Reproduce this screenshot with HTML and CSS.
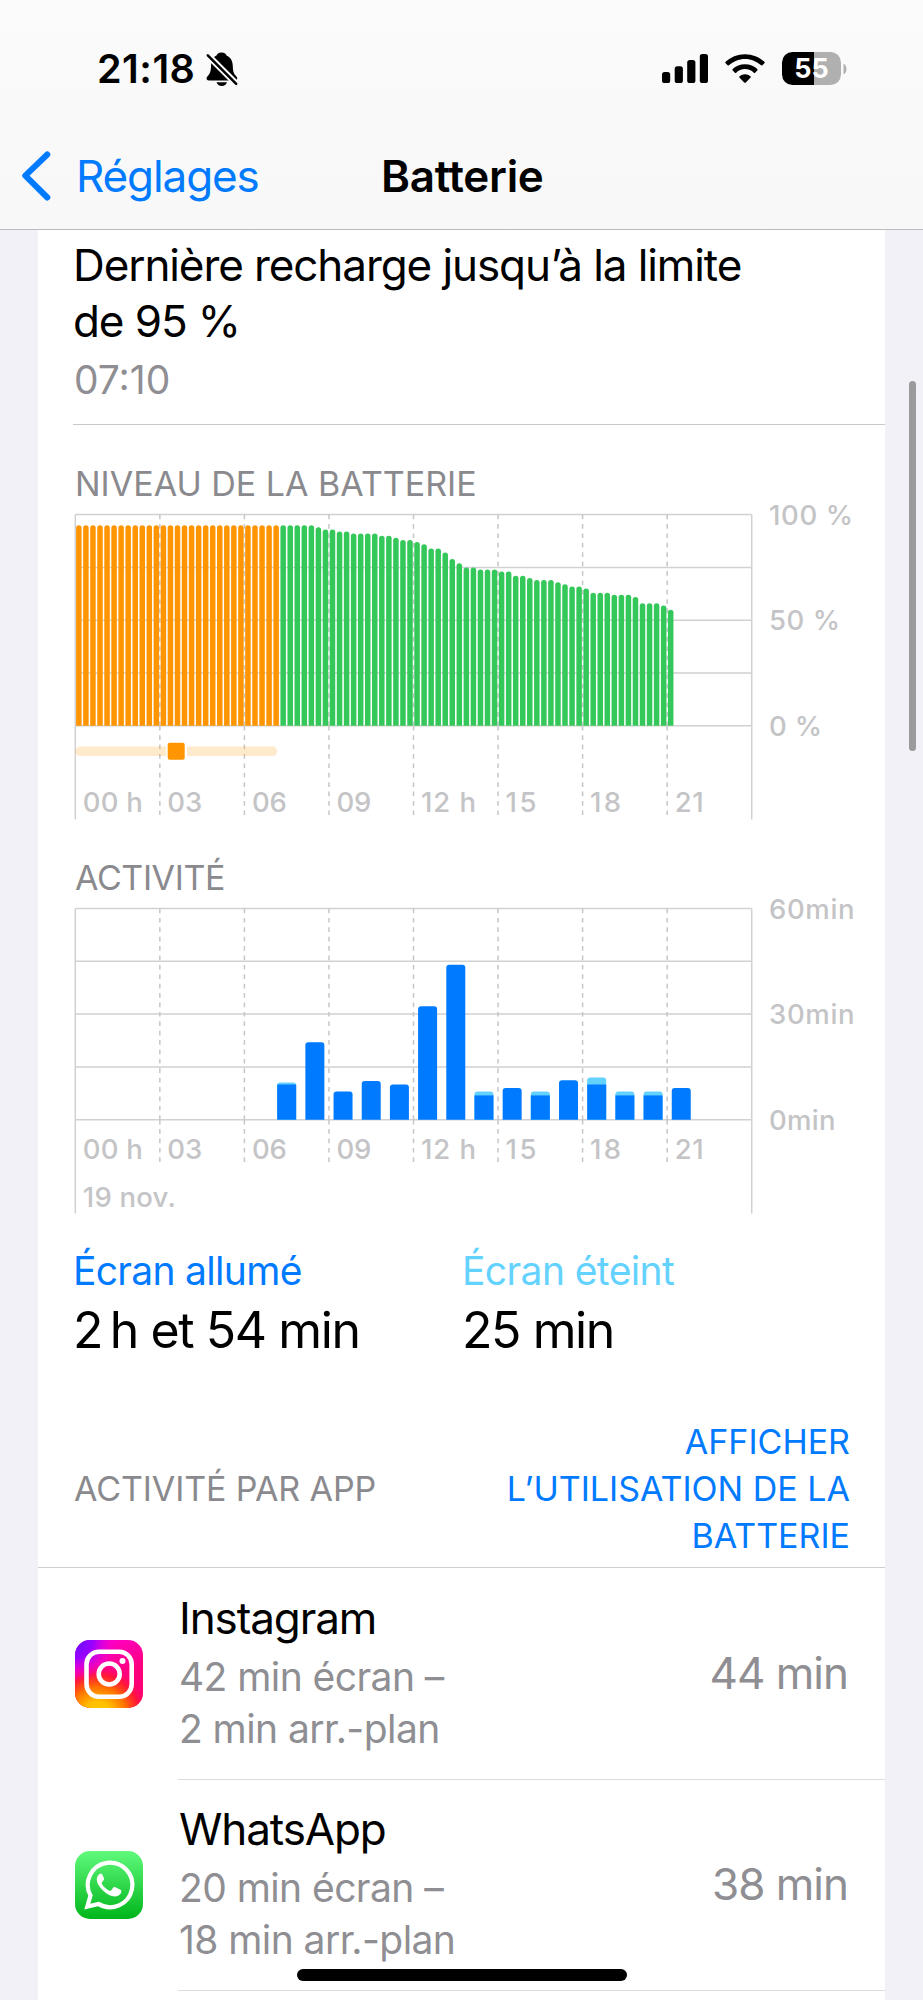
FILE: index.html
```html
<!DOCTYPE html>
<html lang="fr">
<head>
<meta charset="utf-8">
<title>Batterie</title>
<link rel="stylesheet" href="styles.css">
</head>
<body>
<div class="screen">
  <header class="header">
    <div class="status">
      <div class="status-left">
        <span class="clock">21:18</span>
        <svg class="bell" width="34" height="36" viewBox="0 0 34 36">
          <defs><mask id="cut"><rect width="34" height="36" fill="#fff"/><path d="M0 1.5 34 35.5" stroke="#000" stroke-width="6.4"/></mask></defs>
          <g mask="url(#cut)">
            <path d="M16.500 1.500c3.200 0 4.700 1.600 5 3 4.200 1.700 6.200 5.800 6.300 10.500.1 5 .8 7.600 3.200 10 .9.900 1.200 1.600 1.200 2.500 0 1.200-.9 2-2.400 2H4c-1.500 0-2.400-.8-2.400-2 0-.9.300-1.600 1.200-2.500 2.400-2.400 3.100-5 3.200-10 .1-4.700 1.600-8.800 5.500-10.500.5-1.400 1.800-3 5-3z"/>
          </g>
          <path d="M11.500 31.200h10.500c-.7 2.200-2.600 3.700-5.200 3.700s-4.600-1.500-5.300-3.700z"/>
          <path d="M2.800 4.300 31.200 32.800" stroke="#000" stroke-width="2.500" stroke-linecap="round"/>
        </svg>
      </div>
      <div class="status-right">
        <svg width="46" height="30" viewBox="0 0 46 30">
          <rect x="0" y="18" width="8.200" height="11" rx="2.600"/><rect x="12.700" y="12.300" width="8.200" height="16.700" rx="2.600"/>
          <rect x="25.200" y="6" width="8.200" height="23" rx="2.600"/><rect x="37.800" y="0" width="8.200" height="29" rx="2.600"/>
        </svg>
        <svg width="40" height="30" viewBox="0 0 40 30">
          <path d="M20 0.200c7.700 0 14.500 3 19.400 7.600.4.400.4 1 0 1.400l-2 2.100c-.4.400-.9.400-1.300 0C31.700 7.400 26.300 4.900 20 4.900S8.300 7.400 3.900 11.300c-.4.400-.9.400-1.300 0l-2-2.100c-.4-.4-.4-1 0-1.400C5.500 3.200 12.300.2 20 .2z"/>
          <path d="M20 10.200c4.900 0 9.200 1.900 12.300 4.900.4.400.4 1 0 1.400l-2.200 2.200c-.4.400-.9.400-1.300 0-2.300-2.200-5.400-3.600-8.800-3.600s-6.500 1.400-8.800 3.600c-.4.400-.9.400-1.300 0l-2.200-2.200c-.4-.4-.4-1 0-1.400 3.100-3 7.400-4.900 12.300-4.900z"/>
          <path d="M20 20.200c2.100 0 4 .8 5.400 2 .5.400.5 1 0 1.500l-4.600 4.700c-.5.500-1.100.5-1.600 0l-4.600-4.700c-.5-.5-.5-1.100 0-1.500 1.400-1.200 3.300-2 5.400-2z"/>
        </svg>
        <div class="batt"><div class="batt-body">55</div><svg width="4" height="12" viewBox="0 0 4 12"><path d="M.5.8C2.500 1.600 3.500 3.600 3.500 6S2.500 10.400.5 11.200z" fill="#b0b0b0"/></svg></div>
      </div>
    </div>
    <nav class="nav">
      <svg class="chevron" width="30" height="50" viewBox="0 0 30 50"><path d="M26.300 3.500 4.300 24.700l22 21.800" fill="none" stroke="#007aff" stroke-width="6" stroke-linecap="round" stroke-linejoin="round"/></svg>
      <span class="back">Réglages</span>
      <span class="title">Batterie</span>
    </nav>
  </header>

  <main class="card">
    <section class="last-charge">
      <div class="lc-title">Dernière recharge jusqu’à la limite<br>de 95 %</div>
      <div class="lc-time">07:10</div>
    </section>

    <section class="charts">
      <h2 class="caption">NIVEAU DE LA BATTERIE</h2>
      <svg class="chart" id="level" width="800" height="320"></svg>
      <h2 class="caption cap-act">ACTIVITÉ</h2>
      <svg class="chart" id="activity" width="800" height="320"></svg>
    </section>

    <section class="summary">
      <div class="sum-item"><div class="sum-label on">Écran allumé</div><div class="sum-value">2&#8201;h et 54 min</div></div>
      <div class="sum-item"><div class="sum-label off">Écran éteint</div><div class="sum-value">25 min</div></div>
    </section>

    <section class="apps-head">
      <span class="caption apps-cap">ACTIVITÉ PAR APP</span>
      <span class="apps-link">AFFICHER<br>L’UTILISATION DE LA<br>BATTERIE</span>
    </section>

    <section class="app">
      <svg class="app-icon" width="68" height="68" viewBox="0 0 68 68">
        <defs>
          <linearGradient id="igBase" x1="0.3" y1="0" x2="0.7" y2="1"><stop offset="0" stop-color="#ff00d0"/><stop offset=".55" stop-color="#ff0080"/><stop offset="1" stop-color="#ff0070"/></linearGradient>
          <radialGradient id="igWarm" gradientUnits="userSpaceOnUse" cx="23" cy="76" r="53"><stop offset="0" stop-color="#ffd000"/><stop offset=".28" stop-color="#ffbe00"/><stop offset=".55" stop-color="#ff7000"/><stop offset=".78" stop-color="#ff1a30" stop-opacity=".9"/><stop offset="1" stop-color="#ff0080" stop-opacity="0"/></radialGradient>
          <radialGradient id="igCool" gradientUnits="userSpaceOnUse" cx="2" cy="2" r="40"><stop offset="0" stop-color="#6a10ff"/><stop offset=".4" stop-color="#9a00ff"/><stop offset="1" stop-color="#ff00d8" stop-opacity="0"/></radialGradient>
        </defs>
        <rect width="68" height="68" rx="15" fill="url(#igBase)"/>
        <rect width="68" height="68" rx="15" fill="url(#igWarm)"/>
        <rect width="68" height="68" rx="15" fill="url(#igCool)"/>
        <g fill="none" stroke="#fff" stroke-width="4.600"><rect x="11.500" y="11.700" width="45.200" height="45" rx="12.500"/><circle cx="34.200" cy="34" r="10.500"/></g>
        <circle cx="47.500" cy="21" r="3"/>
      </svg>
      <div class="app-text"><div class="app-name">Instagram</div><div class="app-sub">42 min écran –<br>2 min arr.-plan</div></div>
      <div class="app-time">44 min</div>
    </section>

    <section class="app">
      <svg class="app-icon" width="68" height="68" viewBox="0 0 68 68">
        <defs><linearGradient id="wa" x1="0" y1="0" x2="0" y2="1"><stop offset="0" stop-color="#60fa7c"/><stop offset="1" stop-color="#00b51a"/></linearGradient></defs>
        <rect width="68" height="68" rx="15" fill="url(#wa)"/>
        <path d="M12.300 55.600 15.500 44.600A22.300 22.300 0 1 1 23.400 52.900z" fill="none" stroke="#fff" stroke-width="4.200" stroke-linejoin="miter"/>
        <path d="M25.400 22.700c-1.200 0-3.600 2.300-3.600 6.100 0 3.100 1.800 5.800 3.800 8.200 3.300 4 7.600 7.300 12.400 8.300 3.600.6 7.200-1.400 8-3.400.4-1.300.4-2.500 0-2.800l-6-3c-.7-.3-1.300-.2-1.700.4l-2.200 2.900c-.4.500-1 .6-1.600.3-3.200-1.400-6-4-7.700-7-.3-.6-.2-1 .2-1.500l1.900-2.500c.3-.5.3-.9.100-1.400l-2-4.200c-.4-.6-1.100-.4-1.600-.4z" fill="#fff"/>
      </svg>
      <div class="app-text"><div class="app-name">WhatsApp</div><div class="app-sub">20 min écran –<br>18 min arr.-plan</div></div>
      <div class="app-time">38 min</div>
    </section>
  </main>

  <div class="scrollbar"></div>
  <div class="home-bar"></div>
</div>
<script src="charts.js"></script>
</body>
</html>
```
FILE: styles.css
```css
* { box-sizing: border-box; }
body { margin: 0; font-family: Inter, "Liberation Sans", sans-serif; color: #000; background: #f2f1f7; }
.screen { position: relative; width: 923px; height: 2000px; overflow: hidden; background: #f2f1f7; display: flex; flex-direction: column; }

.header { flex: none; height: 230px; background: linear-gradient(#fbfbfc, #f9f9f9 50%, #f8f8f8); border-bottom: 1px solid #bcbcbf; padding-top: 44px; }
.status { height: 50px; display: flex; justify-content: space-between; padding: 0 76px 0 97px; }
.status-left { display: flex; align-items: flex-start; }
.clock { width: 108px; font-size: 39.500px; font-weight: 600; line-height: 50px; letter-spacing: 0.5px; white-space: nowrap; }
.bell { margin-top: 7px; }
.status-right { display: flex; align-items: flex-start; gap: 17px; padding-top: 10px; }
.batt { display: flex; align-items: center; gap: 2px; margin-top: -2px; }
.batt-body { width: 59px; height: 33px; border-radius: 10.500px; background: linear-gradient(90deg, #000 32.500px, #b0b0b0 32.500px); color: #fff; font-size: 27px; font-weight: 700; line-height: 34px; text-align: center; }
.nav { display: grid; grid-template-columns: 76px 305px 1fr; align-items: center; height: 50px; margin-top: 57px; font-size: 44px; line-height: 50px; }
.chevron { margin-left: 21px; }
.back { color: #007aff; letter-spacing: -1.100px; }
.title { font-weight: 600; letter-spacing: -0.3px; }

.card { flex: none; width: 847px; height: 1770px; margin-left: 38px; background: #fff; }
.last-charge { height: 195px; margin-left: 35px; padding-top: 7px; border-bottom: 1px solid #c8c8ca; }
.lc-title { font-size: 44px; line-height: 56px; letter-spacing: -1.090px; white-space: nowrap; }
.lc-time { font-size: 39px; line-height: 50px; margin-top: 6px; color: #8e8e93; padding-left: 1px; }

.caption { margin: 0; font-size: 34px; font-weight: 400; line-height: 40px; color: #8a8a8e; white-space: nowrap; }
.charts { height: 808px; padding: 39px 0 0 37px; }
.cap-act { letter-spacing: -0.4px; }
.chart { display: block; font-size: 27.500px; font-weight: 500; overflow: visible; }
#level { margin-bottom: 34px; }

.summary { display: grid; grid-template-columns: 389px 1fr; height: 155px; padding-left: 35px; padding-top: 13px; }
.sum-label { font-size: 39px; line-height: 50px; letter-spacing: -0.7px; white-space: nowrap; }
.sum-label.on { color: #007aff; }
.sum-label.off { color: #64d2ff; letter-spacing: -0.6px; }
.sum-value { font-size: 50px; line-height: 60px; margin-top: 4px; letter-spacing: -1.420px; white-space: nowrap; }

.apps-head { display: flex; justify-content: space-between; align-items: center; height: 180px; padding: 0 35px 0 36px; border-bottom: 1px solid #cfcfd1; }
.apps-cap { padding-top: 22px; letter-spacing: -0.1px; }
.apps-link { font-size: 34px; line-height: 47px; color: #007aff; text-align: right; padding-top: 21px; white-space: nowrap; }

.app { display: grid; grid-template-columns: 103px 1fr auto; height: 211px; padding-left: 37px; }
.app-icon { align-self: center; margin-top: -1px; fill: #fff; }
.app-text { border-bottom: 1px solid #dcdcde; padding-left: 1px; padding-top: 22px; }
.app-name { font-size: 44px; line-height: 56px; letter-spacing: -1.100px; white-space: nowrap; }
.app-sub { font-size: 39px; line-height: 52px; letter-spacing: -0.57px; color: #8e8e93; margin-top: 5px; white-space: nowrap; }
.app-time { border-bottom: 1px solid #dcdcde; font-size: 44px; line-height: 211px; letter-spacing: -1px; padding-right: 37px; color: #8e8e93; }

.scrollbar { position: absolute; left: 909px; top: 381px; width: 7px; height: 370px; border-radius: 4px; background: #9b9b9d; }
.home-bar { position: absolute; left: 297px; top: 1969px; width: 330px; height: 12px; border-radius: 6px; background: #000; }
```
FILE: charts.js
```js
const NS = "http://www.w3.org/2000/svg";
const PLOT_W = 676.4, PLOT_H = 211.2, X0 = 0.3, GRID = "#d1d1d3";

function add(svg, name, attrs, text) {
  const el = document.createElementNS(NS, name);
  for (const key in attrs) el.setAttribute(key, attrs[key]);
  if (text) el.textContent = text;
  svg.appendChild(el);
}

function label(svg, x, y, text, width) {
  add(svg, "text", { x, y, fill: "#c4c4c6", textLength: width, lengthAdjust: "spacing" }, text);
}

function grid(svg, top, outerBottom, dashBottom) {
  for (let i = 0; i <= 4; i++) {
    const y = top + (PLOT_H * i) / 4;
    add(svg, "path", { d: `M${X0} ${y}h${PLOT_W}`, stroke: GRID, "stroke-width": 1.5 });
  }
  const base = top + PLOT_H;
  for (let i = 0; i <= 8; i++) {
    const x = X0 + (PLOT_W * i) / 8;
    if (i === 0 || i === 8) {
      add(svg, "path", { d: `M${x} ${top}V${outerBottom}`, stroke: GRID, "stroke-width": 1.5 });
    } else {
      // The dash pattern restarts below the baseline
      [[top, base], [base, dashBottom]].forEach(([from, to]) => add(svg, "path", {
        d: `M${x} ${from}V${to}`, stroke: "#c6c6c8", "stroke-width": 1.5, "stroke-dasharray": "4.7 4.7"
      }));
    }
  }
}

function hours(svg, y) {
  const labels = [["00 h", 60], ["03", 35], ["06", 35], ["09", 35], ["12 h", 55], ["15", 31], ["18", 31], ["21", 29]];
  labels.forEach(([text, width], i) => label(svg, X0 + 7.5 + (PLOT_W * i) / 8, y, text, width));
}

// Battery level, one value per quarter of an hour
const level = document.getElementById("level");
const levelTop = 10.6;
grid(level, levelTop, 315.500, 311.5);
const values = Array(34).fill(95).concat([94, 93, 93, 92, 92, 91, 91, 91, 91, 90, 90, 89, 88, 88, 87, 86, 84, 84,
  82, 79, 77, 75, 75, 74, 74, 74, 73, 73, 71, 71, 70, 69, 69, 69, 68, 67, 66, 66, 65, 63, 63, 63,
  62, 62, 62, 61, 58, 58, 58, 57, 55]);
values.forEach((v, i) => {
  const x = X0 + 0.8 + (i * PLOT_W) / 96, h = (v * PLOT_H) / 100, y = levelTop + PLOT_H - h;
  add(level, "path", {
    d: `M${x} ${y + h}V${y + 2.5}q0-2.500 2.750-2.500t2.750 2.500V${y + h}z`,
    fill: i < 29 ? "#ff9500" : "#34c759"
  });
});
add(level, "rect", { x: 0.3, y: 242.500, width: 202, height: 9.600, rx: 4.800, fill: "#ff9500", "fill-opacity": 0.2 });
add(level, "rect", { x: 91, y: 237, width: 21, height: 20, fill: "#fff" });
add(level, "rect", { x: 92.700, y: 238.700, width: 17, height: 17, rx: 2, fill: "#ff9500" });
hours(level, 308);
label(level, 694, 20.500, "100 %", 84);
label(level, 694, 126, "50 %", 71);
label(level, 694, 232, "0 %", 53);

// Activity in minutes: [hour, total, screen on]
const activity = document.getElementById("activity");
const actTop = 10.500;
grid(activity, actTop, 315.500, 264.500);
[[7, 10.6, 10], [8, 22, 22], [9, 8, 8], [10, 11, 11], [11, 10, 10], [12, 32.2, 32], [13, 44, 44], [14, 8, 6.9], [15, 9, 9],
 [16, 8, 6.9], [17, 11.2, 11], [18, 12, 10], [19, 8, 6.9], [20, 8, 6.9], [21, 9, 9]].forEach(([hour, total, on]) => {
  const x = X0 + 4.6 + (hour * PLOT_W) / 24, base = actTop + PLOT_H;
  const h = (total * PLOT_H) / 60, hOn = (on * PLOT_H) / 60;
  const top = total - on > 0.3 ? "#64d2ff" : "#007aff";
  add(activity, "path", { d: `M${x} ${base}v${-(h - 3)}q0-3 3-3h13q3 0 3 3V${base}z`, fill: top });
  if (top !== "#007aff") add(activity, "rect", { x, y: base - hOn, width: 19, height: hOn, fill: "#007aff" });
});
hours(activity, 261);
label(activity, X0 + 7.5, 308.500, "19 nov.", 93);
label(activity, 694, 21, "60min", 85.500);
label(activity, 694, 126, "30min", 85.500);
label(activity, 694, 232, "0min", 66.500);
```
